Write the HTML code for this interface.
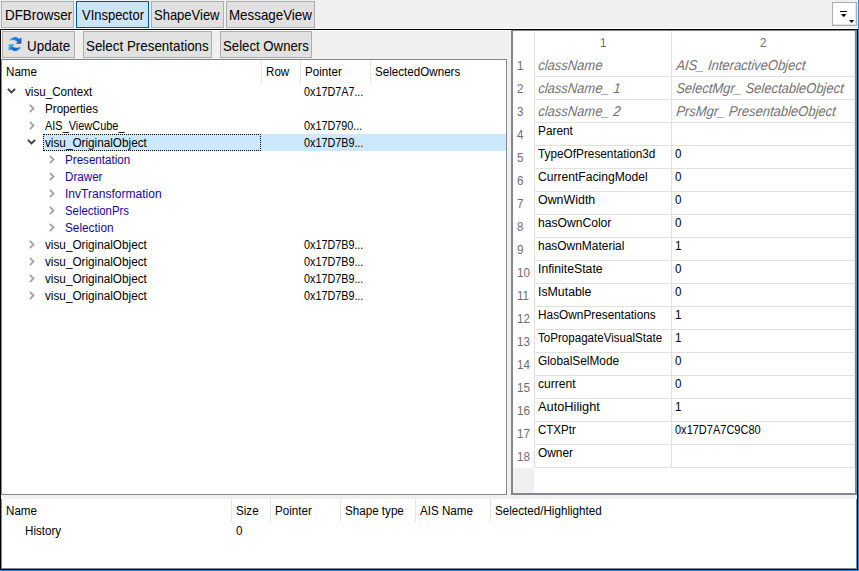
<!DOCTYPE html><html><head><meta charset="utf-8"><style>
html,body{margin:0;padding:0;}
body{width:859px;height:571px;position:relative;overflow:hidden;background:#f0f0f0;font-family:"Liberation Sans",sans-serif;}
.t{position:absolute;white-space:pre;line-height:16px;transform-origin:0 0;}
.s{font-size:12.5px;transform:scaleX(0.93);}
.b{font-size:13.7px;letter-spacing:-0.3px;}
.bb{font-size:14.3px;}
.i{font-size:14.2px;font-style:italic;transform:scaleX(0.915) skewX(-6deg);transform-origin:0 12px;}
</style></head><body>
<div style="position:absolute;left:0px;top:28px;width:858px;height:1px;background:#fff"></div>
<div style="position:absolute;left:1px;top:30px;width:856px;height:1px;background:#fff"></div>
<div style="position:absolute;left:1px;top:30px;width:1px;height:539px;background:#fff"></div>
<div style="position:absolute;left:0px;top:29px;width:858px;height:1px;background:#000"></div>
<div style="position:absolute;left:0px;top:29px;width:1px;height:541px;background:#000"></div>
<div style="position:absolute;left:857px;top:29px;width:1px;height:541px;background:#000"></div>
<div style="position:absolute;left:0px;top:569px;width:858px;height:1px;background:#000"></div>
<div style="position:absolute;left:858px;top:0px;width:1px;height:571px;background:#1e8ce6"></div>
<div style="position:absolute;left:0px;top:570px;width:859px;height:1px;background:#1e8ce6"></div>
<div style="position:absolute;left:1px;top:1px;width:73px;height:27px;box-sizing:border-box;border:1px solid #adadad;background:#e1e1e1"></div>
<div class="t bb" style="left:4.6px;top:7px;color:#000;transform:scaleX(0.9379);">DFBrowser</div>
<div style="position:absolute;left:76px;top:1px;width:73px;height:27px;box-sizing:border-box;border:1px solid #005499;background:#cce4f7"></div>
<div class="t bb" style="left:81.9px;top:7px;color:#000;transform:scaleX(0.9065);">VInspector</div>
<div style="position:absolute;left:151px;top:1px;width:73px;height:27px;box-sizing:border-box;border:1px solid #adadad;background:#e1e1e1"></div>
<div class="t bb" style="left:154.3px;top:7px;color:#000;transform:scaleX(0.9087);">ShapeView</div>
<div style="position:absolute;left:226px;top:1px;width:89px;height:27px;box-sizing:border-box;border:1px solid #adadad;background:#e1e1e1"></div>
<div class="t bb" style="left:229.1px;top:7px;color:#000;transform:scaleX(0.9335);">MessageView</div>
<div style="position:absolute;left:832px;top:2px;width:25px;height:24px;box-sizing:border-box;border:1px solid #adadad;background:#fff"></div>
<svg style="position:absolute;left:832px;top:2px" width="25" height="24"><rect x="8" y="9" width="7" height="1" fill="#000"/><rect x="23" y="1" width="1" height="22" fill="#e3e3e3"/><rect x="1" y="22" width="23" height="1" fill="#e3e3e3"/><path d="M9 12h5.4l-2.7 3.3z" fill="#000"/><path d="M17 18h5.2l-2.6 3z" fill="#000"/></svg>
<div style="position:absolute;left:2px;top:31px;width:73px;height:27px;box-sizing:border-box;border:1px solid #adadad;background:#e1e1e1"></div>
<div style="position:absolute;left:83px;top:31px;width:129px;height:27px;box-sizing:border-box;border:1px solid #adadad;background:#e1e1e1"></div>
<div class="t bb" style="left:86.3px;top:37.5px;color:#000;transform:scaleX(0.9357);">Select Presentations</div>
<div style="position:absolute;left:220px;top:31px;width:92px;height:27px;box-sizing:border-box;border:1px solid #adadad;background:#e1e1e1"></div>
<div class="t bb" style="left:223.1px;top:37.5px;color:#000;transform:scaleX(0.9232);">Select Owners</div>
<div class="t bb" style="left:26.7px;top:37.5px;color:#000;transform:scaleX(0.9376);">Update</div>
<svg style="position:absolute;left:4px;top:34px" width="22" height="20" viewBox="0 0 22 20">
<defs><linearGradient id="g1" x1="0" y1="0" x2="1" y2="0.6"><stop offset="0" stop-color="#7fd0ff"/><stop offset="0.45" stop-color="#1a7ee8"/><stop offset="1" stop-color="#0b63d6"/></linearGradient>
<linearGradient id="g2" x1="1" y1="1" x2="0" y2="0.4"><stop offset="0" stop-color="#2a7fe0"/><stop offset="0.55" stop-color="#0b5fd2"/><stop offset="1" stop-color="#3cb4f8"/></linearGradient></defs>
<path d="M5.2 6.6 C6.5 3.2 11.8 1.6 15.2 4.9 L17.4 3.6 L17.4 9.7 L11.6 9.7 L13.5 7.9 C11.5 5.9 8 5.4 5.2 6.6 Z" fill="url(#g1)"/>
<path d="M16.6 13.0 C15.5 16.8 10.2 18.4 6.8 15.3 L4.6 16.6 L4.6 10.3 L10.4 10.3 L8.5 12.2 C10.5 14.0 13.8 14.3 16.6 13.0 Z" fill="url(#g2)"/>
</svg>
<div style="position:absolute;left:1px;top:59px;width:506px;height:436px;box-sizing:border-box;border:1px solid #828790;background:#fff"></div>
<div style="position:absolute;left:261px;top:60px;width:1px;height:23px;background:#e5e5e5"></div>
<div style="position:absolute;left:300px;top:60px;width:1px;height:23px;background:#e5e5e5"></div>
<div style="position:absolute;left:370px;top:60px;width:1px;height:23px;background:#e5e5e5"></div>
<div class="t s" style="left:6px;top:64px;color:#000;">Name</div>
<div class="t s" style="left:266px;top:64px;color:#000;">Row</div>
<div class="t s" style="left:305px;top:64px;color:#000;">Pointer</div>
<div class="t s" style="left:375px;top:64px;color:#000;">SelectedOwners</div>
<div style="position:absolute;left:43px;top:134px;width:463px;height:17px;background:#cce8ff"></div>
<div style="position:absolute;left:43px;top:134px;width:218px;height:17px;box-sizing:border-box;border:1px dotted #000"></div>
<svg style="position:absolute;left:7px;top:88px" width="10" height="7"><path d="M0.9 0.9 L4.5 4.5 L8.1 0.9" stroke="#3c3c3c" stroke-width="1.8" fill="none"/></svg>
<div class="t s" style="left:25px;top:84px;color:#000;">visu_Context</div>
<div class="t s" style="left:304px;top:84px;color:#000;transform:scaleX(0.865);">0x17D7A7<span style="letter-spacing:-0.2px">...</span></div>
<svg style="position:absolute;left:29px;top:104px" width="7" height="10"><path d="M0.9 0.9 L4.5 4.5 L0.9 8.1" stroke="#a3a3a3" stroke-width="1.8" fill="none"/></svg>
<div class="t s" style="left:45px;top:101px;color:#000;">Properties</div>
<svg style="position:absolute;left:29px;top:121px" width="7" height="10"><path d="M0.9 0.9 L4.5 4.5 L0.9 8.1" stroke="#a3a3a3" stroke-width="1.8" fill="none"/></svg>
<div class="t s" style="left:45px;top:118px;color:#000;transform:scaleX(0.8751);">AIS_ViewCube_</div>
<div class="t s" style="left:304px;top:118px;color:#000;transform:scaleX(0.865);">0x17D790<span style="letter-spacing:-0.2px">...</span></div>
<svg style="position:absolute;left:27px;top:139px" width="10" height="7"><path d="M0.9 0.9 L4.5 4.5 L8.1 0.9" stroke="#3c3c3c" stroke-width="1.8" fill="none"/></svg>
<div class="t s" style="left:45px;top:135px;color:#000;transform:scaleX(0.9393);">visu_OriginalObject</div>
<div class="t s" style="left:304px;top:135px;color:#000;transform:scaleX(0.865);">0x17D7B9<span style="letter-spacing:-0.2px">...</span></div>
<svg style="position:absolute;left:49px;top:155px" width="7" height="10"><path d="M0.9 0.9 L4.5 4.5 L0.9 8.1" stroke="#a3a3a3" stroke-width="1.8" fill="none"/></svg>
<div class="t s" style="left:65px;top:152px;color:#18089a;">Presentation</div>
<svg style="position:absolute;left:49px;top:172px" width="7" height="10"><path d="M0.9 0.9 L4.5 4.5 L0.9 8.1" stroke="#a3a3a3" stroke-width="1.8" fill="none"/></svg>
<div class="t s" style="left:65px;top:169px;color:#18089a;">Drawer</div>
<svg style="position:absolute;left:49px;top:189px" width="7" height="10"><path d="M0.9 0.9 L4.5 4.5 L0.9 8.1" stroke="#a3a3a3" stroke-width="1.8" fill="none"/></svg>
<div class="t s" style="left:65px;top:186px;color:#18089a;transform:scaleX(0.9644);">InvTransformation</div>
<svg style="position:absolute;left:49px;top:206px" width="7" height="10"><path d="M0.9 0.9 L4.5 4.5 L0.9 8.1" stroke="#a3a3a3" stroke-width="1.8" fill="none"/></svg>
<div class="t s" style="left:65px;top:203px;color:#18089a;transform:scaleX(0.9123);">SelectionPrs</div>
<svg style="position:absolute;left:49px;top:223px" width="7" height="10"><path d="M0.9 0.9 L4.5 4.5 L0.9 8.1" stroke="#a3a3a3" stroke-width="1.8" fill="none"/></svg>
<div class="t s" style="left:65px;top:220px;color:#18089a;transform:scaleX(0.9439);">Selection</div>
<svg style="position:absolute;left:29px;top:240px" width="7" height="10"><path d="M0.9 0.9 L4.5 4.5 L0.9 8.1" stroke="#a3a3a3" stroke-width="1.8" fill="none"/></svg>
<div class="t s" style="left:45px;top:237px;color:#000;transform:scaleX(0.9393);">visu_OriginalObject</div>
<div class="t s" style="left:304px;top:237px;color:#000;transform:scaleX(0.865);">0x17D7B9<span style="letter-spacing:-0.2px">...</span></div>
<svg style="position:absolute;left:29px;top:257px" width="7" height="10"><path d="M0.9 0.9 L4.5 4.5 L0.9 8.1" stroke="#a3a3a3" stroke-width="1.8" fill="none"/></svg>
<div class="t s" style="left:45px;top:254px;color:#000;transform:scaleX(0.9393);">visu_OriginalObject</div>
<div class="t s" style="left:304px;top:254px;color:#000;transform:scaleX(0.865);">0x17D7B9<span style="letter-spacing:-0.2px">...</span></div>
<svg style="position:absolute;left:29px;top:274px" width="7" height="10"><path d="M0.9 0.9 L4.5 4.5 L0.9 8.1" stroke="#a3a3a3" stroke-width="1.8" fill="none"/></svg>
<div class="t s" style="left:45px;top:271px;color:#000;transform:scaleX(0.9393);">visu_OriginalObject</div>
<div class="t s" style="left:304px;top:271px;color:#000;transform:scaleX(0.865);">0x17D7B9<span style="letter-spacing:-0.2px">...</span></div>
<svg style="position:absolute;left:29px;top:291px" width="7" height="10"><path d="M0.9 0.9 L4.5 4.5 L0.9 8.1" stroke="#a3a3a3" stroke-width="1.8" fill="none"/></svg>
<div class="t s" style="left:45px;top:288px;color:#000;transform:scaleX(0.9393);">visu_OriginalObject</div>
<div class="t s" style="left:304px;top:288px;color:#000;transform:scaleX(0.865);">0x17D7B9<span style="letter-spacing:-0.2px">...</span></div>
<div style="position:absolute;left:511px;top:30px;width:346px;height:465px;box-sizing:border-box;border:2px solid #828790;border-top:1px solid #828790;background:#fff"></div>
<div style="position:absolute;left:513px;top:468px;width:21px;height:25px;background:#f0f0f0"></div>
<div style="position:absolute;left:534px;top:31px;width:1px;height:437px;background:#e0e0e0"></div>
<div style="position:absolute;left:671px;top:31px;width:1px;height:437px;background:#e0e0e0"></div>
<div style="position:absolute;left:854px;top:31px;width:1px;height:437px;background:#e8e8e8"></div>
<div class="t s" style="left:600px;top:35px;color:#6d6d6d;">1</div>
<div class="t s" style="left:760px;top:35px;color:#6d6d6d;">2</div>
<div style="position:absolute;left:534px;top:76px;width:320px;height:1px;background:#e0e0e0"></div>
<div class="t s" style="left:517px;top:58px;color:#6d6d6d;">1</div>
<div class="t i" style="left:538px;top:57px;color:#707070;">className</div>
<div class="t i" style="left:676px;top:57px;color:#707070;">AIS_ InteractiveObject</div>
<div style="position:absolute;left:534px;top:99px;width:320px;height:1px;background:#e0e0e0"></div>
<div class="t s" style="left:517px;top:81px;color:#6d6d6d;">2</div>
<div class="t i" style="left:538px;top:80px;color:#707070;">className_ 1</div>
<div class="t i" style="left:676px;top:80px;color:#707070;">SelectMgr_ SelectableObject</div>
<div style="position:absolute;left:534px;top:122px;width:320px;height:1px;background:#e0e0e0"></div>
<div class="t s" style="left:517px;top:104px;color:#6d6d6d;">3</div>
<div class="t i" style="left:538px;top:103px;color:#707070;">className_ 2</div>
<div class="t i" style="left:676px;top:103px;color:#707070;">PrsMgr_ PresentableObject</div>
<div style="position:absolute;left:534px;top:145px;width:320px;height:1px;background:#e0e0e0"></div>
<div class="t s" style="left:517px;top:127px;color:#6d6d6d;">4</div>
<div class="t s" style="left:538px;top:123px;color:#000;transform:scaleX(0.9467);">Parent</div>
<div class="t s" style="left:675px;top:123px;color:#000;"></div>
<div style="position:absolute;left:534px;top:168px;width:320px;height:1px;background:#e0e0e0"></div>
<div class="t s" style="left:517px;top:150px;color:#6d6d6d;">5</div>
<div class="t s" style="left:538px;top:146px;color:#000;transform:scaleX(0.9439);">TypeOfPresentation3d</div>
<div class="t s" style="left:675px;top:146px;color:#000;">0</div>
<div style="position:absolute;left:534px;top:191px;width:320px;height:1px;background:#e0e0e0"></div>
<div class="t s" style="left:517px;top:173px;color:#6d6d6d;">6</div>
<div class="t s" style="left:538px;top:169px;color:#000;transform:scaleX(0.9681);">CurrentFacingModel</div>
<div class="t s" style="left:675px;top:169px;color:#000;">0</div>
<div style="position:absolute;left:534px;top:214px;width:320px;height:1px;background:#e0e0e0"></div>
<div class="t s" style="left:517px;top:196px;color:#6d6d6d;">7</div>
<div class="t s" style="left:538px;top:192px;color:#000;transform:scaleX(0.9932);">OwnWidth</div>
<div class="t s" style="left:675px;top:192px;color:#000;">0</div>
<div style="position:absolute;left:534px;top:237px;width:320px;height:1px;background:#e0e0e0"></div>
<div class="t s" style="left:517px;top:219px;color:#6d6d6d;">8</div>
<div class="t s" style="left:538px;top:215px;color:#000;transform:scaleX(0.9691);">hasOwnColor</div>
<div class="t s" style="left:675px;top:215px;color:#000;">0</div>
<div style="position:absolute;left:534px;top:260px;width:320px;height:1px;background:#e0e0e0"></div>
<div class="t s" style="left:517px;top:242px;color:#6d6d6d;">9</div>
<div class="t s" style="left:538px;top:238px;color:#000;transform:scaleX(0.9560);">hasOwnMaterial</div>
<div class="t s" style="left:675px;top:238px;color:#000;">1</div>
<div style="position:absolute;left:534px;top:283px;width:320px;height:1px;background:#e0e0e0"></div>
<div class="t s" style="left:517px;top:265px;color:#6d6d6d;">10</div>
<div class="t s" style="left:538px;top:261px;color:#000;transform:scaleX(0.9784);">InfiniteState</div>
<div class="t s" style="left:675px;top:261px;color:#000;">0</div>
<div style="position:absolute;left:534px;top:306px;width:320px;height:1px;background:#e0e0e0"></div>
<div class="t s" style="left:517px;top:288px;color:#6d6d6d;">11</div>
<div class="t s" style="left:538px;top:284px;color:#000;transform:scaleX(0.9867);">IsMutable</div>
<div class="t s" style="left:675px;top:284px;color:#000;">0</div>
<div style="position:absolute;left:534px;top:329px;width:320px;height:1px;background:#e0e0e0"></div>
<div class="t s" style="left:517px;top:311px;color:#6d6d6d;">12</div>
<div class="t s" style="left:538px;top:307px;color:#000;transform:scaleX(0.9467);">HasOwnPresentations</div>
<div class="t s" style="left:675px;top:307px;color:#000;">1</div>
<div style="position:absolute;left:534px;top:352px;width:320px;height:1px;background:#e0e0e0"></div>
<div class="t s" style="left:517px;top:334px;color:#6d6d6d;">13</div>
<div class="t s" style="left:538px;top:330px;color:#000;transform:scaleX(0.9272);">ToPropagateVisualState</div>
<div class="t s" style="left:675px;top:330px;color:#000;">1</div>
<div style="position:absolute;left:534px;top:375px;width:320px;height:1px;background:#e0e0e0"></div>
<div class="t s" style="left:517px;top:357px;color:#6d6d6d;">14</div>
<div class="t s" style="left:538px;top:353px;color:#000;transform:scaleX(0.9495);">GlobalSelMode</div>
<div class="t s" style="left:675px;top:353px;color:#000;">0</div>
<div style="position:absolute;left:534px;top:398px;width:320px;height:1px;background:#e0e0e0"></div>
<div class="t s" style="left:517px;top:380px;color:#6d6d6d;">15</div>
<div class="t s" style="left:538px;top:376px;color:#000;transform:scaleX(0.9691);">current</div>
<div class="t s" style="left:675px;top:376px;color:#000;">0</div>
<div style="position:absolute;left:534px;top:421px;width:320px;height:1px;background:#e0e0e0"></div>
<div class="t s" style="left:517px;top:403px;color:#6d6d6d;">16</div>
<div class="t s" style="left:538px;top:399px;color:#000;transform:scaleX(1.0230);">AutoHilight</div>
<div class="t s" style="left:675px;top:399px;color:#000;">1</div>
<div style="position:absolute;left:534px;top:444px;width:320px;height:1px;background:#e0e0e0"></div>
<div class="t s" style="left:517px;top:426px;color:#6d6d6d;">17</div>
<div class="t s" style="left:538px;top:422px;color:#000;transform:scaleX(0.9226);">CTXPtr</div>
<div class="t s" style="left:675px;top:422px;color:#000;transform:scaleX(0.8807);">0x17D7A7C9C80</div>
<div style="position:absolute;left:534px;top:467px;width:320px;height:1px;background:#e0e0e0"></div>
<div class="t s" style="left:517px;top:449px;color:#6d6d6d;">18</div>
<div class="t s" style="left:538px;top:445px;color:#000;transform:scaleX(0.9523);">Owner</div>
<div class="t s" style="left:675px;top:445px;color:#000;"></div>
<div style="position:absolute;left:1px;top:499px;width:856px;height:70px;box-sizing:border-box;border:1px solid #828790;border-top:none;background:#fff"></div>
<div style="position:absolute;left:231px;top:499px;width:1px;height:23px;background:#e5e5e5"></div>
<div style="position:absolute;left:270px;top:499px;width:1px;height:23px;background:#e5e5e5"></div>
<div style="position:absolute;left:340px;top:499px;width:1px;height:23px;background:#e5e5e5"></div>
<div style="position:absolute;left:415px;top:499px;width:1px;height:23px;background:#e5e5e5"></div>
<div style="position:absolute;left:490px;top:499px;width:1px;height:23px;background:#e5e5e5"></div>
<div class="t s" style="left:6px;top:503px;color:#000;">Name</div>
<div class="t s" style="left:236px;top:503px;color:#000;">Size</div>
<div class="t s" style="left:275px;top:503px;color:#000;">Pointer</div>
<div class="t s" style="left:345px;top:503px;color:#000;">Shape type</div>
<div class="t s" style="left:420px;top:503px;color:#000;">AIS Name</div>
<div class="t s" style="left:495px;top:503px;color:#000;">Selected/Highlighted</div>
<div class="t s" style="left:25px;top:523px;color:#000;">History</div>
<div class="t s" style="left:236px;top:523px;color:#000;">0</div>
</body></html>
